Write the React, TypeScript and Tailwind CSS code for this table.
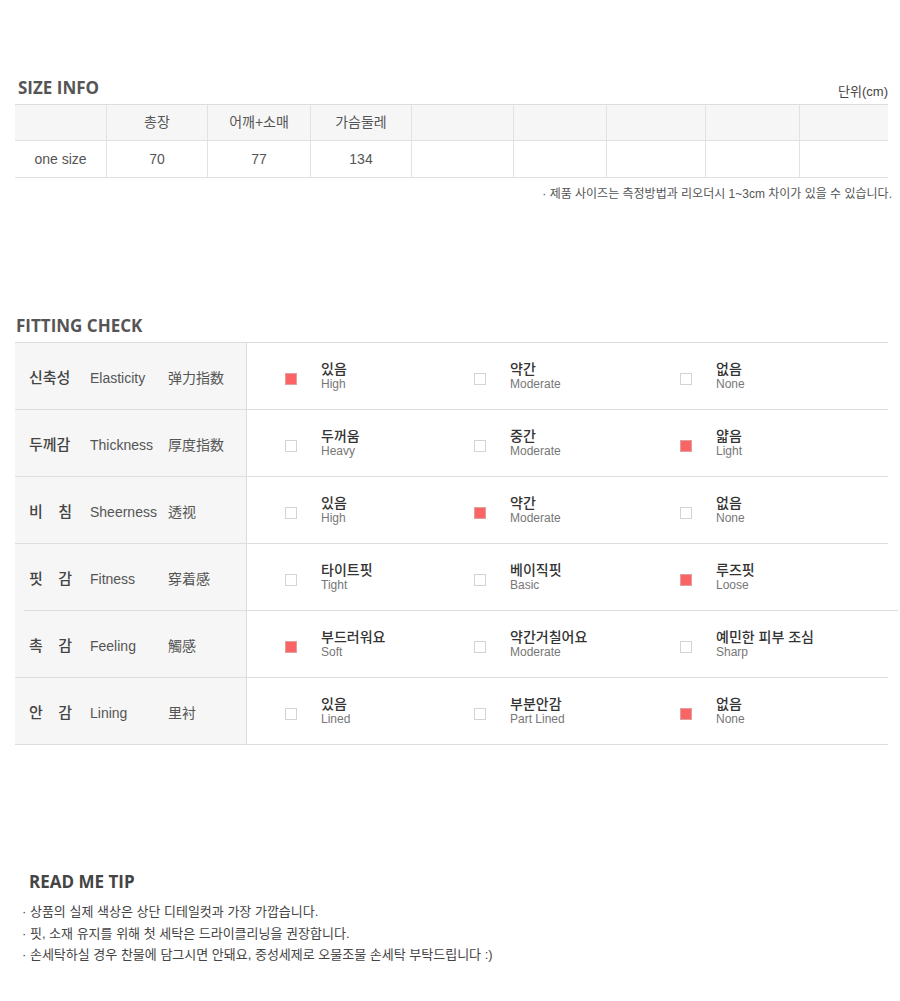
import React from "react";

const KR = "font-['Liberation_Sans','Noto_Sans_CJK_KR',sans-serif]";
const HEAD = "font-['Open_Sans','Noto_Sans_CJK_KR',sans-serif]";

const sizeCols = [92, 101, 103, 101, 102, 93, 99, 94, 88];
const sizeHead = ["", "총장", "어깨+소매", "가슴둘레", "", "", "", "", ""];
const sizeBody = ["one size", "70", "77", "134", "", "", "", "", ""];

type Opt = { ko: string; en: string };
type FitRow = { ko: string; en: string; zh: string; opts: Opt[]; pick: number };

const rows: FitRow[] = [
  {
    ko: "신축성",
    en: "Elasticity",
    zh: "弹力指数",
    pick: 0,
    opts: [
      { ko: "있음", en: "High" },
      { ko: "약간", en: "Moderate" },
      { ko: "없음", en: "None" },
    ],
  },
  {
    ko: "두께감",
    en: "Thickness",
    zh: "厚度指数",
    pick: 2,
    opts: [
      { ko: "두꺼움", en: "Heavy" },
      { ko: "중간", en: "Moderate" },
      { ko: "얇음", en: "Light" },
    ],
  },
  {
    ko: "비침",
    en: "Sheerness",
    zh: "透视",
    pick: 1,
    opts: [
      { ko: "있음", en: "High" },
      { ko: "약간", en: "Moderate" },
      { ko: "없음", en: "None" },
    ],
  },
  {
    ko: "핏감",
    en: "Fitness",
    zh: "穿着感",
    pick: 2,
    opts: [
      { ko: "타이트핏", en: "Tight" },
      { ko: "베이직핏", en: "Basic" },
      { ko: "루즈핏", en: "Loose" },
    ],
  },
  {
    ko: "촉감",
    en: "Feeling",
    zh: "觸感",
    pick: 0,
    opts: [
      { ko: "부드러워요", en: "Soft" },
      { ko: "약간거칠어요", en: "Moderate" },
      { ko: "예민한 피부 조심", en: "Sharp" },
    ],
  },
  {
    ko: "안감",
    en: "Lining",
    zh: "里衬",
    pick: 2,
    opts: [
      { ko: "있음", en: "Lined" },
      { ko: "부분안감", en: "Part Lined" },
      { ko: "없음", en: "None" },
    ],
  },
];

const tips = [
  "· 상품의 실제 색상은 상단 디테일컷과 가장 가깝습니다.",
  "· 핏, 소재 유지를 위해 첫 세탁은 드라이클리닝을 권장합니다.",
  "· 손세탁하실 경우 찬물에 담그시면 안돼요, 중성세제로 오물조물 손세탁 부탁드립니다 :)",
];

const Check = ({ on }: { on: boolean }) => (
  <span
    className={`block w-[12px] h-[12px] shrink-0 border ${
      on ? "bg-[#fa6464] border-[#e0a0a0]" : "bg-white border-[#d4d4d4]"
    }`}
  />
);

const Label = ({ text }: { text: string }) =>
  text.length === 2 ? (
    <span className="flex w-[43px] justify-between">
      <span>{text[0]}</span>
      <span>{text[1]}</span>
    </span>
  ) : (
    <span className="block w-[43px]">{text}</span>
  );

const App = () => {
  return (
    <div className={`w-[900px] min-h-[1001px] bg-white text-[#555] ${KR}`}>
      {/* size info */}
      <div className="pt-[77px] pl-[15px] pr-[12px]">
        <div className="flex justify-between items-end h-[22px] mb-[5px]">
          <span className={`${HEAD} pl-[3px] text-[17px] font-bold leading-[22px] text-[#555]`}>
            SIZE INFO
          </span>
          <span className="text-[13px] leading-[16px] mb-[-1px] text-[#444]">단위(cm)</span>
        </div>
        <div className="border-t border-[#dcdcdc]">
          <div className="flex h-[36px] bg-[#f6f6f6] border-b border-[#e0e0e0]">
            {sizeHead.map((t, i) => (
              <div
                key={i}
                style={{ width: sizeCols[i] }}
                className={`flex items-center justify-center text-[14px] ${
                  i < sizeCols.length - 1 ? "border-r border-[#e2e2e2]" : ""
                }`}
              >
                {t}
              </div>
            ))}
          </div>
          <div className="flex h-[37px] border-b border-[#e0e0e0]">
            {sizeBody.map((t, i) => (
              <div
                key={i}
                style={{ width: sizeCols[i] }}
                className={`flex items-center justify-center text-[14px] ${
                  i < sizeCols.length - 1 ? "border-r border-[#e2e2e2]" : ""
                }`}
              >
                {t}
              </div>
            ))}
          </div>
        </div>
        <div className="flex justify-end mr-[-4px] mt-[8px] text-[12px] leading-[16px] text-[#555]">
          · 제품 사이즈는 측정방법과 리오더시 1~3cm 차이가 있을 수 있습니다.
        </div>
      </div>

      {/* fitting check */}
      <div className="mt-[113px] pl-[15px] pr-[12px]">
        <div className={`${HEAD} pl-[1px] text-[17px] font-bold leading-[22px] text-[#555] mb-[5px]`}>
          FITTING CHECK
        </div>
        <div className="border-t border-[#dcdcdc]">
          {rows.map((r, ri) => (
            <React.Fragment key={ri}>
              <div
                className={`flex ${ri === 3 ? "h-[66px]" : "h-[67px] border-b border-[#dedede]"}`}
              >
                <div className="flex items-center w-[232px] h-full bg-[#f6f6f6] border-r border-[#dcdcdc] pl-[14px] pt-[4px]">
                  <span className="text-[15px] font-medium text-[#444]">
                    <Label text={r.ko} />
                  </span>
                  <span className="ml-[18px] w-[78px] text-[14px] text-[#555]">{r.en}</span>
                  <span className="text-[14px] text-[#555]">{r.zh}</span>
                </div>
                <div className="flex flex-1 items-center pl-[38px]">
                  {r.opts.map((o, oi) => (
                    <div
                      key={oi}
                      className={`flex items-center gap-[24px] ${
                        oi === 0 ? "w-[189px]" : oi === 1 ? "w-[206px]" : "flex-1"
                      }`}
                    >
                      <span className="mt-[6px]">
                        <Check on={r.pick === oi} />
                      </span>
                      <div className="flex flex-col">
                        <span className="text-[14px] leading-[16px] font-medium text-[#333]">{o.ko}</span>
                        <span className="text-[12px] leading-[15px] text-[#777]">{o.en}</span>
                      </div>
                    </div>
                  ))}
                </div>
              </div>
              {ri === 3 && (
                <div className="flex h-px">
                  <div className="w-[9px] bg-[#f6f6f6]" />
                  <div className="flex-1 bg-[#dedede] mr-[-10px]" />
                </div>
              )}
            </React.Fragment>
          ))}
        </div>
      </div>

      {/* read me tip */}
      <div className="mt-[126px] pl-[22px] pb-[30px]">
        <div className={`${HEAD} pl-[7px] text-[17px] font-bold leading-[22px] text-[#444] mb-[8px]`}>
          READ ME TIP
        </div>
        {tips.map((t, i) => (
          <div key={i} className="text-[13px] leading-[21.5px] text-[#444]">
            {t}
          </div>
        ))}
      </div>
    </div>
  );
};

export default App;
